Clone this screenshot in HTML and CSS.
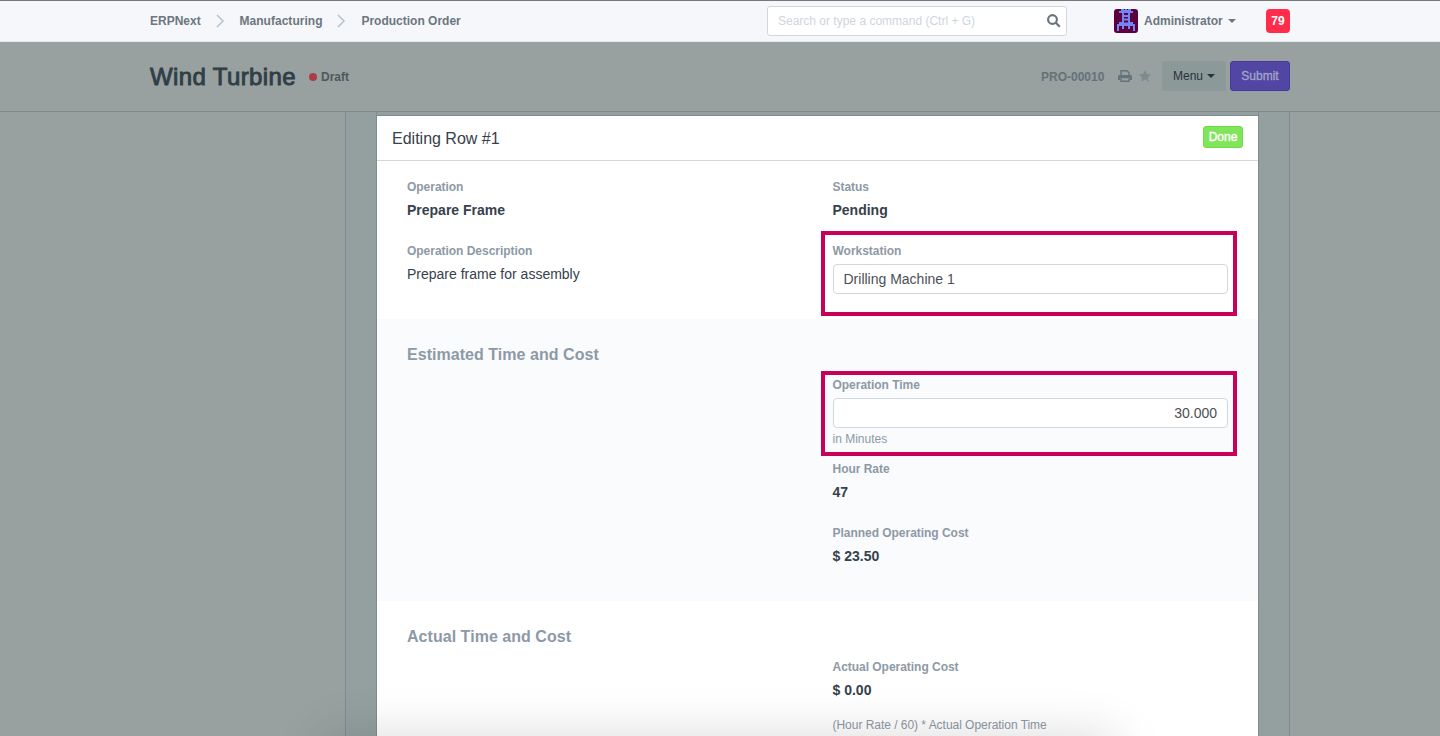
FILE: index.html
```html
<!DOCTYPE html>
<html lang="en">
<head>
<meta charset="utf-8">
<title>Wind Turbine</title>
<link rel="stylesheet" href="styles.css">
</head>
<body>
<header class="navbar">
  <div class="container nav-row">
    <nav class="crumbs">
      <a class="c1">ERPNext</a>
      <svg class="chev" viewBox="0 0 9 14"><path d="M1 1l6 6-6 6"/></svg>
      <a class="c2">Manufacturing</a>
      <svg class="chev" viewBox="0 0 9 14"><path d="M1 1l6 6-6 6"/></svg>
      <a class="c3">Production Order</a>
    </nav>
    <div class="search"><span>Search or type a command (Ctrl + G)</span>
      <svg class="mag" viewBox="0 0 14 14"><circle cx="5.500" cy="5.500" r="4.400"/><path d="M8.800 8.800l4 4"/></svg>
    </div>
    <div class="user">
      <svg class="avatar" viewBox="0 0 24 24"><rect width="24" height="24" rx="3" fill="#5e003f"/><path fill="#6f86f5" d="M7 0h10v2h2v2h-3v9h3v2h2v7h-2v-5h-3v3h-2v-3h-4v3H8v-3H5v5H3v-7h2v-2h3V4H5V2h2z"/><path fill="#5e003f" d="M10 4h4v2h-4zM10 8h4v1.500h-4zM10 11.500h4v2h-4zM10 0h1v1h-1zM13 0h1v1h-1z"/></svg>
      <span class="name">Administrator</span><i class="caret"></i>
    </div>
    <span class="badge">79</span>
  </div>
</header>
<section class="page-head">
  <div class="container head-row">
    <h1>Wind Turbine</h1>
    <i class="dot"></i><span class="draft">Draft</span>
    <span class="docname">PRO-00010</span>
    <svg class="printer" viewBox="0 0 14 12"><path d="M3 6V.7h6L11 2.700V6M3 8.500v2.800h8V8.500" fill="none" stroke="#64727a" stroke-width="1.400"/><path d="M1.500 5h11Q14 5 14 6.500V10h-2.200V8.300H2.200V10H0V6.500Q0 5 1.500 5z" fill="#64727a"/></svg>
    <svg class="star" viewBox="0 0 12 12"><path d="M6 0l1.800 3.900 4.200.6-3.100 2.900.8 4.300L6 9.600l-3.700 2.100.8-4.300L0 4.500l4.200-.6z"/></svg>
    <span class="menu">Menu<i class="caret dark"></i></span>
    <span class="submit">Submit</span>
  </div>
</section>
<main class="workspace">
  <div class="dialog">
    <div class="dialog-head"><span>Editing Row #1</span><span class="done">Done</span></div>
    <section class="sec first">
      <div class="col">
        <div class="field"><label>Operation</label><b>Prepare Frame</b></div>
        <div class="field"><label>Operation Description</label><p>Prepare frame for assembly</p></div>
      </div>
      <div class="col">
        <div class="field"><label>Status</label><b>Pending</b></div>
        <div class="field marked"><label>Workstation</label><div class="input">Drilling Machine 1</div></div>
      </div>
    </section>
    <section class="sec shade">
      <h2>Estimated Time and Cost</h2>
      <div class="right">
        <div class="field marked time"><label>Operation Time</label><div class="input num">30.000</div><small>in Minutes</small></div>
        <div class="field"><label>Hour Rate</label><b>47</b></div>
        <div class="field"><label>Planned Operating Cost</label><b>$ 23.50</b></div>
      </div>
    </section>
    <section class="sec last">
      <h2>Actual Time and Cost</h2>
      <div class="right">
        <div class="field"><label>Actual Operating Cost</label><b>$ 0.00</b><small class="formula">(Hour Rate / 60) * Actual Operation Time</small></div>
      </div>
    </section>
  </div>
</main>
<div class="shadow"></div>
</body>
</html>
```
FILE: styles.css
```css
*,*::before,*::after{box-sizing:border-box}
body{margin:0;height:736px;overflow:hidden;position:relative;display:flex;flex-direction:column;background:#98a0a0;font-family:"Liberation Sans",Arial,sans-serif;font-size:12px;color:#36414c;white-space:nowrap}
.container{width:1140px;margin:0 auto}
.navbar{height:42px;flex:none;background:#f5f7fa;border-top:1px solid #787878;border-bottom:1px solid #e3e8ea}
.nav-row{height:40px;display:flex;align-items:center}
.crumbs{display:flex;align-items:center;width:617px;font-weight:700;color:#6c7680}
.chev{width:9px;height:14px;fill:none;stroke:#b8c5d0;stroke-width:1.6}
.c1{width:66px}.c2{width:98px;margin-left:14.4px;letter-spacing:.04px}.c3{margin-left:15px}
.search{width:300px;height:30px;border:1px solid #d1d8dd;border-radius:3px;background:#fff;color:#ced6dc;display:flex;align-items:center;justify-content:space-between;padding:0 5px 0 10px}
.mag{width:14px;height:14px;fill:none;stroke:#67727c;stroke-width:2.1}
.user{display:flex;align-items:center;margin-left:47px;width:152px;font-weight:700;color:#6c7680}
.avatar{width:24px;height:24px;margin-right:6px}
.caret{border:4px solid transparent;border-top-color:#6c7680;border-bottom:0;margin-left:5px}
.caret.dark{border-top-color:#273239;margin-left:4px}
.badge{width:24px;height:24px;border-radius:4px;background:#ff2c4b;color:#fff;font-weight:700;line-height:24px;text-align:center}
.page-head{height:70px;flex:none;border-bottom:1px solid #7f8c8e}
.head-row{display:flex;align-items:center;height:69px}
h1{margin:0;font-size:24px;font-weight:400;color:#303e46;width:159px;letter-spacing:.38px;-webkit-text-stroke:.9px}
.dot{width:8px;height:8px;border-radius:50%;background:#a93e46;margin-right:4px}
.draft{font-weight:700;color:#4d595e;width:720px}
.docname{font-weight:700;color:#647178;width:77px}
.printer{width:14px;height:12px;margin:-2px 7px 0 0}
.star{width:12px;height:12px;fill:#7f8a8e;margin:-2px 11px 0 0}
.menu{width:64px;height:30px;border-radius:3px;background:#8c9999;display:flex;align-items:center;padding-left:11px;color:#273239;margin:-2px 4px 0 0}
.submit{width:60px;height:30px;border-radius:3px;background:#5146a4;border:1px solid #4739a0;color:#a4a6c4;line-height:28px;text-align:center;-webkit-text-stroke:.3px;margin-top:-2px}
.workspace{width:945px;margin-left:345px;height:624px;border:solid #7f8c8e;border-width:0 1px;background:#93a09f;padding:0 30px}
.dialog{width:883px;height:624px;background:#fff;border:1px solid #7f8c8e;border-width:0 1px}
.dialog::before{content:"";display:block;height:4px;background:#93a09f;border-bottom:1px solid #7f8c8e}
.dialog-head{height:45px;border-bottom:1px solid #d1d8dd;display:flex;align-items:center;justify-content:space-between;padding:1px 15px 0;font-size:16px}
.done{width:40px;height:22px;border:1px solid #72dc48;border-radius:3px;background:#80e55a;color:#fff;font-size:12px;line-height:20px;text-align:center;-webkit-text-stroke:.4px;margin-top:-3px}
.sec{padding:0 30px}
.first{height:158px;padding-top:19px;display:grid;grid-template-columns:425.5px 395.5px}
.shade{height:282px;background:#fafbfc;padding-top:26px}
.last{height:135px;padding-top:26px}
h2{margin:0;height:33px;font-size:16px;line-height:19px;font-weight:700;color:#8d99a6;letter-spacing:.04px}
.right{margin-left:425.5px}
.field{height:64px;position:relative}
label{display:block;height:14px;line-height:14px;font-weight:700;color:#8d99a6;margin-bottom:6px;width:max-content;letter-spacing:-.03px}
b,p{display:block;margin:0;font-size:14px;line-height:20px}
.input{width:395.5px;height:30px;border:1px solid #d1d8dd;border-radius:4px;background:#fff;font-size:14px;line-height:28px;padding:0 10px;color:#4b4f55}
.num{text-align:right}
.time{height:84px}
small{display:block;font-size:12px;line-height:14px;color:#8d99a6;margin-top:4px}
.formula{margin-top:18px;letter-spacing:-.03px}
.marked::after{content:"";position:absolute;left:-11.5px;top:-13px;width:416px;height:85px;border:4px solid #c80058}
.marked.time::after{top:-7px}
.shadow{position:absolute;left:335px;top:746px;width:770px;height:30px;box-shadow:0 0 50px 10px rgba(0,0,0,.15)}
```
